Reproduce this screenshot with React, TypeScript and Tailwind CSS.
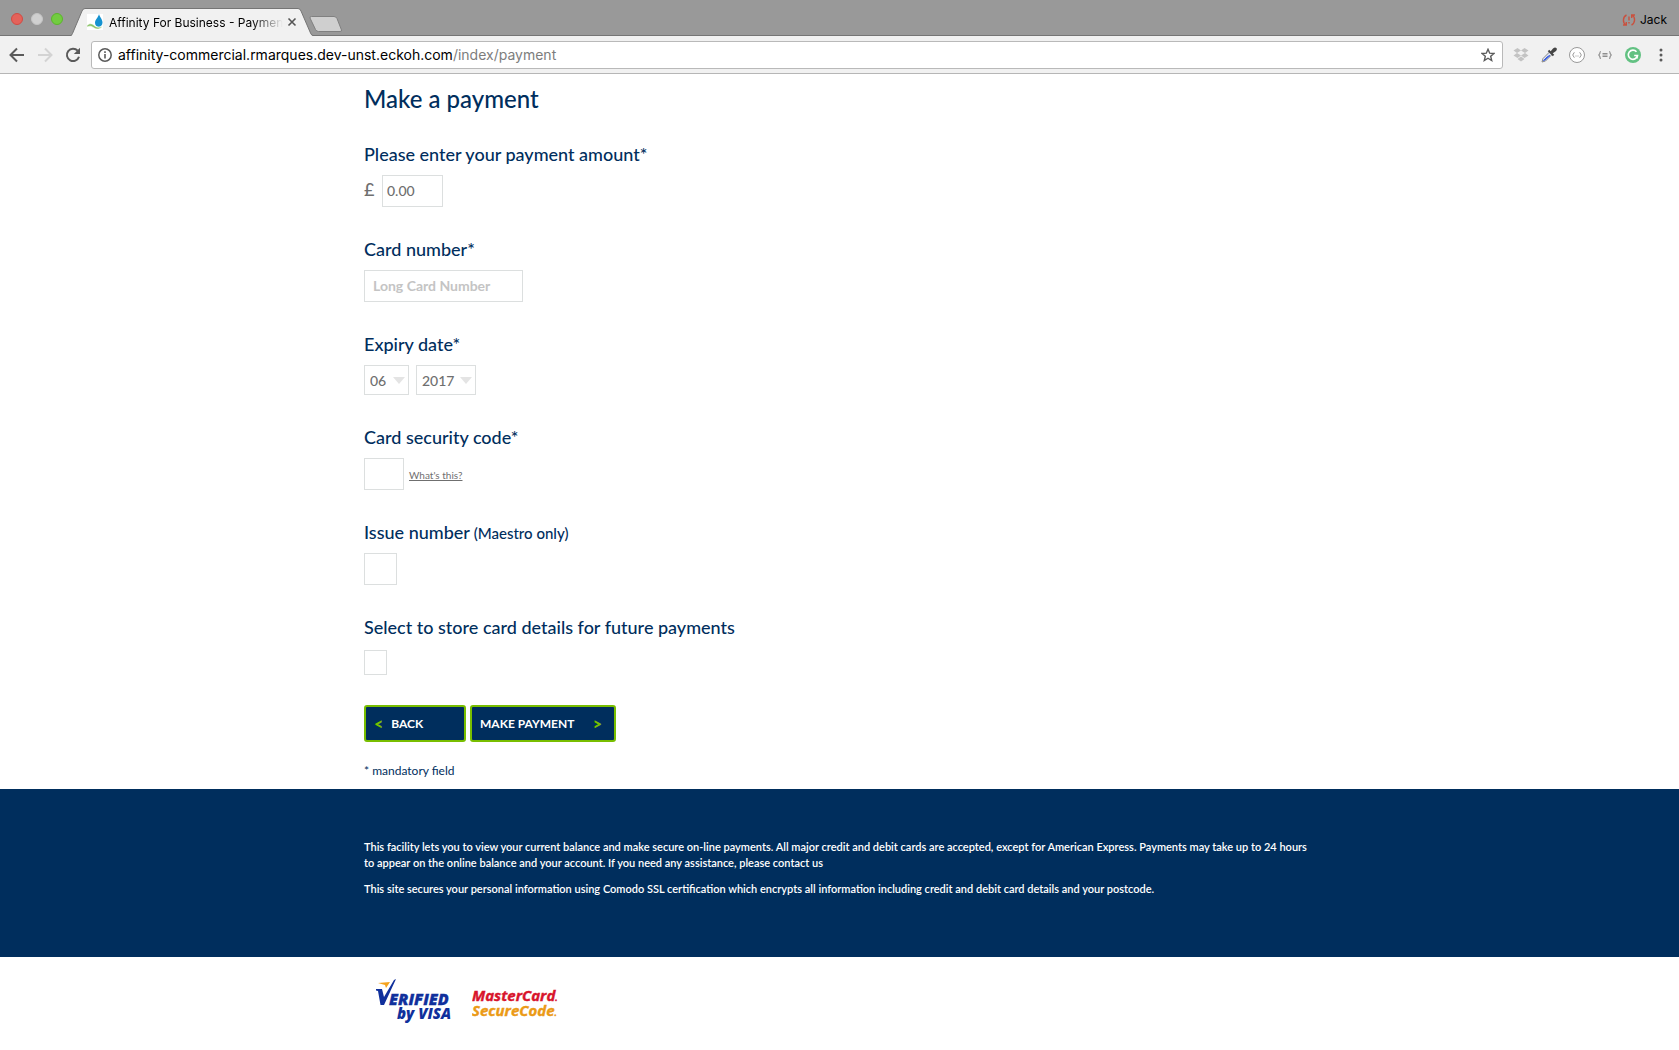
import React from "react";

const fieldBox = "block h-8 border border-[#dcdfdf] bg-white pb-0.5 text-sm font-medium text-[#6f6f6f] outline-none rounded-none";

function Chrome() {
  return (
    <header className="font-[Inter,sans-serif]">
      <div className="flex h-9 items-end bg-[#999999] shadow-[inset_0_-1px_0_#757575]">
        <div className="flex items-center gap-2 self-stretch pt-0.5 pl-[11px]">
          <button aria-label="Close window" className="size-3 rounded-full border border-[#d14b43] bg-[#e4625a]" />
          <button aria-label="Minimise window" className="size-3 rounded-full border border-[#c4c4c4] bg-[#d0d0d0]" />
          <button aria-label="Zoom window" className="size-3 rounded-full border border-[#5bb52c] bg-[#72cc40]" />
        </div>
        <div className="relative ml-2 h-7 w-[242px]">
          <svg aria-hidden="true" className="absolute inset-0" width="242" height="28" viewBox="0 0 242 28">
            <path d="M0 28 Q1 27 1.500 25.500 L11 3 Q12 .5 14 .5 H227 Q229 .5 230 3 L239.500 25 Q240.500 27.500 242 28 Z" fill="#f1f1f1" />
            <path d="M0 27.500 Q1 27 1.500 25.500 L11 3 Q12 .5 14 .5 H227 Q229 .5 230 3 L239.500 25 Q240.500 27.500 242 27.500" fill="none" stroke="#757575" />
          </svg>
          <div className="relative flex h-full items-center pl-4">
            <svg aria-hidden="true" className="shrink-0" width="16" height="16" viewBox="0 0 16 16">
              <rect width="16" height="16" fill="#fff" />
              <path d="M12 0c.5 2.800 3.500 5 3.500 8.600 0 2.600-1.600 4.200-3.700 4.200S8 11.200 8 8.800C8 5.600 11.400 3.400 12 0Z" fill="#1592d0" />
              <path d="M0 11.500c3-3 5.500-1.500 7.500.2 2.500 2 5 2 8 .8-3.200 3.300-6.200 3-8.700 1.200C4.600 12.200 3 11.500 0 13Z" fill="#8cc56a" stroke="#fff" strokeWidth=".5" />
            </svg>
            <span className="ml-1.5 w-[174px] overflow-hidden pt-0.5 text-xs whitespace-nowrap text-black [mask-image:linear-gradient(to_right,#000_82%,transparent)]">
              Affinity For Business - Payment
            </span>
            <button aria-label="Close tab" className="ml-1">
              <svg width="10" height="10" viewBox="0 0 10 10" stroke="#555" strokeWidth="1.600">
                <path d="M1.500 1.500 8.500 8.500M8.500 1.500 1.500 8.500" />
              </svg>
            </button>
          </div>
        </div>
        <button aria-label="New tab" className="mb-[3px] -ml-1">
          <svg width="34" height="17" viewBox="0 0 34 17">
            <path d="M2.500.5H25Q27 .5 28 2.500L32.500 14Q33 15.500 31 15.500H9.500Q7.500 15.500 6.500 13.500L1 2Q.6.5 2.500.5Z" fill="#cfcfcf" stroke="#808080" />
          </svg>
        </button>
        <button className="mr-3 ml-auto flex items-center gap-1 self-stretch pt-1 text-xs text-black">
          <svg aria-hidden="true" width="14" height="12" viewBox="0 0 14 12" fill="none" stroke="#c9513f" strokeWidth="1.400">
            <path d="M4.500 1C.5 3 .5 9 4 11M1 11h3.300V8M9.500 11C13.500 9 13.500 3 10 1M13 1H9.700v3M7 2.500v4M7 8v1.500" />
          </svg>
          Jack
        </button>
      </div>
      <div className="flex h-[38px] items-center border-b border-[#b6b6b6] bg-[#f1f1f1]">
        <button aria-label="Back" className="ml-[9px]">
          <svg width="16" height="16" viewBox="0 0 16 16" fill="none" stroke="#5a5a5a" strokeWidth="2">
            <path d="M15 8H2.500M8 1.500 1.500 8 8 14.500" />
          </svg>
        </button>
        <button aria-label="Forward" className="ml-3">
          <svg width="16" height="16" viewBox="0 0 16 16" fill="none" stroke="#d3d3d3" strokeWidth="2">
            <path d="M1 8H13.500M8 1.500 14.500 8 8 14.500" />
          </svg>
        </button>
        <button aria-label="Reload" className="ml-3">
          <svg width="16" height="16" viewBox="0 0 16 16">
            <path d="M12.700 3.700A6.200 6.200 0 1 0 14 9.800" fill="none" stroke="#5a5a5a" strokeWidth="2" />
            <path d="M15 .8V7H8.800Z" fill="#5a5a5a" />
          </svg>
        </button>
        <div className="ml-2.5 flex h-7 flex-1 items-center rounded-[3px] border border-[#b9b9b9] bg-white">
          <svg aria-hidden="true" className="ml-1.5 shrink-0" width="14" height="14" viewBox="0 0 14 14">
            <circle cx="7" cy="7" r="6.200" fill="none" stroke="#5a5a5a" strokeWidth="1.500" />
            <path d="M6.200 6h1.600v4.500H6.200ZM6.200 3.300h1.600v1.600H6.200Z" fill="#5a5a5a" />
          </svg>
          <div aria-label="Address" className="ml-1.5 flex-1 text-sm whitespace-nowrap text-black">
            affinity-commercial.rmarques.dev-unst.eckoh.com<span className="text-[#7d7d7d]">/index/payment</span>
          </div>
          <button aria-label="Bookmark this page" className="mr-[7px]">
            <svg width="14" height="14" viewBox="0 0 14 14" fill="none" stroke="#5a5a5a" strokeWidth="1.400">
              <path d="M7 1.300 8.700 5.200 13 5.500 9.700 8.300 10.700 12.500 7 10.200 3.300 12.500 4.300 8.300 1 5.500 5.300 5.200Z" />
            </svg>
          </button>
        </div>
        <div className="flex items-center pr-2.5 pl-2.5">
          <button aria-label="Dropbox">
            <svg width="16" height="16" viewBox="0 0 16 16" fill="#c3c3c3">
              <path d="M4.500 1 8 3.500 4 6 .5 3.500ZM11.500 1 15.500 3.500 12 6 8 3.500ZM.5 8.500 4 6 8 8.500 4.500 11ZM12 6 15.500 8.500 11.500 11 8 8.500ZM4.500 12 8 9.500 11.500 12 8 14.500Z" />
            </svg>
          </button>
          <button aria-label="Colour picker" className="ml-3">
            <svg width="16" height="16" viewBox="0 0 16 16">
              <path d="M9 4.500 2 11.500 1 15 4.500 14 11.500 7Z" fill="#dfe4f2" stroke="#8a8a8a" />
              <path d="M6.500 9.500 2.500 13.500 4 13 9 8.500Z" fill="#3c5fe0" stroke="#3c5fe0" />
              <path d="M7.500 3.500 12.500 8.500" stroke="#444" strokeWidth="2" />
              <path d="M9.500 4.500 12 1.500Q14-.2 15.300 1T15 4L11.500 6.500Z" fill="#444" />
            </svg>
          </button>
          <button aria-label="JSON viewer" className="ml-3">
            <svg width="16" height="16" viewBox="0 0 16 16" fill="none" stroke="#999">
              <circle cx="8" cy="8" r="7.500" fill="#fff" />
              <path d="M5.500 5.500Q4.500 5.500 4.500 7L3.500 8 4.500 9Q4.500 10.500 5.500 10.500M10.500 5.500Q11.500 5.500 11.500 7L12.500 8 11.500 9Q11.500 10.500 10.500 10.500M6.500 9h1M8.500 9h1" />
            </svg>
          </button>
          <button aria-label="Code formatter" className="ml-3">
            <svg width="16" height="16" viewBox="0 0 16 16" fill="none" stroke="#8f8f8f" strokeWidth="1.200">
              <path d="M4 4.500Q2.800 4.500 2.800 6.500L1.800 8 2.800 9.500Q2.800 11.500 4 11.500M12 4.500Q13.200 4.500 13.200 6.500L14.200 8 13.200 9.500Q13.200 11.500 12 11.500M5.500 6.500h5M5.500 8h5M5.500 9.500h5" />
            </svg>
          </button>
          <button aria-label="Grammarly" className="ml-3">
            <svg width="16" height="16" viewBox="0 0 16 16">
              <circle cx="8" cy="8" r="8" fill="#62c182" />
              <path d="M11.500 4.800A4.600 4.600 0 1 0 12.500 8.500H9.200M12.500 8.500 11.800 11.500" fill="none" stroke="#fff" strokeWidth="1.600" />
            </svg>
          </button>
          <button aria-label="Menu" className="ml-3">
            <svg width="16" height="16" viewBox="0 0 16 16" fill="#5a5a5a">
              <circle cx="8" cy="3" r="1.500" />
              <circle cx="8" cy="8" r="1.500" />
              <circle cx="8" cy="13" r="1.500" />
            </svg>
          </button>
        </div>
      </div>
    </header>
  );
}

function Field({ id, label, note, children }: { id: string; label: string; note?: string; children: React.ReactNode }) {
  return (
    <div className="mb-[29px]">
      <label htmlFor={id} className="mb-2 block text-lg leading-[26px] font-medium">
        {label}
        {note && <span className="text-[15px] leading-none"> {note}</span>}
      </label>
      <div className="flex items-center">{children}</div>
    </div>
  );
}

function Select({ id, label, options, width }: { id: string; label: string; options: string[]; width: string }) {
  return (
    <div className={"relative " + width}>
      <select
        id={id}
        aria-label={label}
        className="block h-[30px] w-full appearance-none border border-[#dcdfdf] bg-white pt-0.5 pl-[5px] text-sm font-medium text-[#6f6f6f]"
      >
        {options.map((o) => (
          <option key={o}>{o}</option>
        ))}
      </select>
      <svg aria-hidden="true" className="pointer-events-none absolute top-3 right-1" width="12" height="7" viewBox="0 0 12 7">
        <path d="M0 0H12L6 7Z" fill="#e4e4e4" />
      </svg>
    </div>
  );
}

export default function App() {
  return (
    <div className="min-h-screen bg-white font-[Lato,sans-serif] text-[#002e5d]">
      <Chrome />
      <main className="mx-auto w-full max-w-[951px]">
        <form onSubmit={(e) => e.preventDefault()}>
          <h1 className="mb-[26px] pt-[9px] text-2xl leading-8 font-medium">Make a payment</h1>
          <Field id="amount" label="Please enter your payment amount*">
            <span className="w-[18px] pb-1 text-lg leading-6 font-medium text-[#6f6f6f]">£</span>
            <input id="amount" defaultValue="0.00" className={fieldBox + " w-[61px] px-1"} />
          </Field>
          <Field id="card" label="Card number*">
            <input
              id="card"
              placeholder="Long Card Number"
              className={fieldBox + " w-[159px] px-2 placeholder:font-bold placeholder:text-[#c4c4c4]"}
            />
          </Field>
          <Field id="month" label="Expiry date*">
            <div className="flex gap-[7px]">
              <Select id="month" label="Expiry month" options={["06", "07", "08"]} width="w-[45px]" />
              <Select id="year" label="Expiry year" options={["2017", "2018", "2019"]} width="w-[60px]" />
            </div>
          </Field>
          <Field id="cvc" label="Card security code*">
            <input id="cvc" className={fieldBox + " w-10 px-1"} />
            <a href="#cvc" className="ml-[5px] pt-0.5 text-[10px] text-[#6f6f6f] underline">
              What's this?
            </a>
          </Field>
          <Field id="issue" label="Issue number" note="(Maestro only)">
            <input id="issue" className={fieldBox + " w-[33px] px-1"} />
          </Field>
          <Field id="store" label="Select to store card details for future payments">
            <input id="store" type="checkbox" className="mt-0.5 block h-[25px] w-[23px] appearance-none border border-[#dcdfdf] bg-white" />
          </Field>
          <div className="flex gap-1 pt-px text-xs font-bold text-white">
            <button type="button" className="flex h-[37px] w-[102px] items-center gap-2 rounded-[3px] border-2 border-[#78be00] bg-[#002e5d] px-2">
              <span aria-hidden="true" className="text-base font-black text-[#78be00]">&lt;</span>
              BACK
            </button>
            <button type="submit" className="flex h-[37px] w-[146px] items-center justify-between rounded-[3px] border-2 border-[#78be00] bg-[#002e5d] pr-3 pl-2">
              MAKE PAYMENT
              <span aria-hidden="true" className="text-base font-black text-[#78be00]">&gt;</span>
            </button>
          </div>
          <p className="pt-5 pb-[9px] text-xs leading-[18px]">* mandatory field</p>
        </form>
      </main>
      <footer>
        <div className="bg-[#002e5d] pt-[50px] pb-[60px] text-white">
          <div className="mx-auto w-full max-w-[951px] text-[11px] leading-4 font-semibold">
            <p>
              This facility lets you to view your current balance and make secure on-line payments. All major credit and debit cards are
              accepted, except for American Express. Payments may take up to 24 hours to appear on the online balance and your account. If
              you need any assistance, please <a href="#contact">contact us</a>
            </p>
            <p className="mt-2.5">
              This site secures your personal information using Comodo SSL certification which encrypts all information including credit
              and debit card details and your postcode.
            </p>
          </div>
        </div>
        <div className="mx-auto flex w-full max-w-[951px] gap-3.5 pt-5 pl-3">
          <svg role="img" aria-label="Verified by Visa" width="82" height="48" viewBox="0 0 82 48" fontFamily="Open Sans, sans-serif" fontWeight="800" fontStyle="italic" fill="#10309c">
            <path d="M2 6 14 5 10 11 9 8Z" fill="#f5a21b" />
            <path d="M0 12H6L8 20 18 3 20 2 8 28H4.500L2 14 0 13.500Z" />
            <text x="13" y="28" fontSize="16" stroke="#10309c" strokeWidth=".3">ERIFIED</text>
            <text x="21" y="42" fontSize="15">by VISA</text>
          </svg>
          <svg role="img" aria-label="MasterCard SecureCode" width="100" height="48" viewBox="0 0 100 48" fontFamily="Open Sans, sans-serif" fontWeight="700" fontStyle="italic" fontSize="15">
            <text x="0" y="24" fill="#d8142c" stroke="#d8142c" strokeWidth=".4">
              MasterCard<tspan fontSize="8">.</tspan>
            </text>
            <text x="0" y="39" fill="#eb9a16" stroke="#eb9a16" strokeWidth=".4">
              SecureCode<tspan fontSize="8">.</tspan>
            </text>
          </svg>
        </div>
      </footer>
    </div>
  );
}
